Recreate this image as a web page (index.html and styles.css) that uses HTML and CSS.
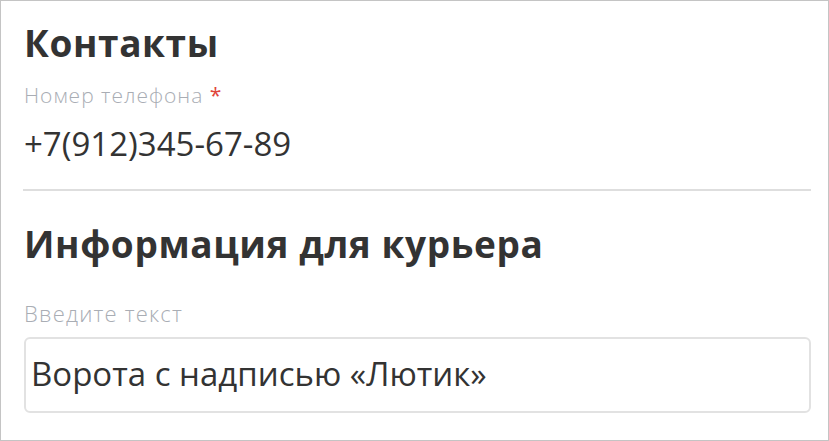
FILE: index.html
```html
<!DOCTYPE html>
<html lang="ru">
<head>
<meta charset="utf-8">
<link rel="stylesheet" href="styles.css">
</head>
<body>
<div class="frame">
  <section class="block">
    <h2 class="title">Контакты</h2>
    <div class="label">Номер телефона <span class="req">*</span></div>
    <div class="value">+7(912)345-67-89</div>
  </section>
  <hr class="divider">
  <section class="block">
    <h2 class="title title-second">Информация для курьера</h2>
    <div class="label label-second">Введите текст</div>
    <div class="input"><span class="input-text">Ворота с надписью «Лютик»</span></div>
  </section>
</div>
</body>
</html>
```
FILE: styles.css
```css
html, body {
  margin: 0;
  padding: 0;
  background: #fff;
}
body {
  font-family: "Open Sans", "Noto Sans", sans-serif;
  color: #333;
}
.frame {
  width: 829px;
  height: 441px;
  box-sizing: border-box;
  border: 1px solid #c4c4c4;
  padding: 20px 17px 0 23px;
  overflow: hidden;
}
.title {
  margin: 0;
  font-size: 37px;
  font-weight: 700;
  letter-spacing: 0.6px;
  line-height: 44px;
  color: #333;
}
.label {
  font-size: 21px;
  font-weight: 300;
  letter-spacing: 1px;
  line-height: 26px;
  color: #a9adb4;
  margin-top: 17px;
}
.req {
  color: #e0443a;
  font-weight: 400;
}
.value {
  font-size: 33px;
  line-height: 40px;
  margin-top: 16px;
  color: #333;
}
.divider {
  border: 0;
  height: 2px;
  background: #dedede;
  margin: 25px 0 0 -1px;
}
.title-second {
  margin-top: 31px;
}
.label-second {
  font-size: 22px;
  letter-spacing: 1.2px;
  margin-top: 34px;
}
.input {
  margin-top: 11px;
  height: 76px;
  box-sizing: border-box;
  border: 2px solid #e2e2e2;
  border-radius: 6px;
  display: flex;
  align-items: center;
  padding: 0 5px 2px;
}
.input-text {
  font-size: 33px;
  line-height: 40px;
  color: #333;
}
```
